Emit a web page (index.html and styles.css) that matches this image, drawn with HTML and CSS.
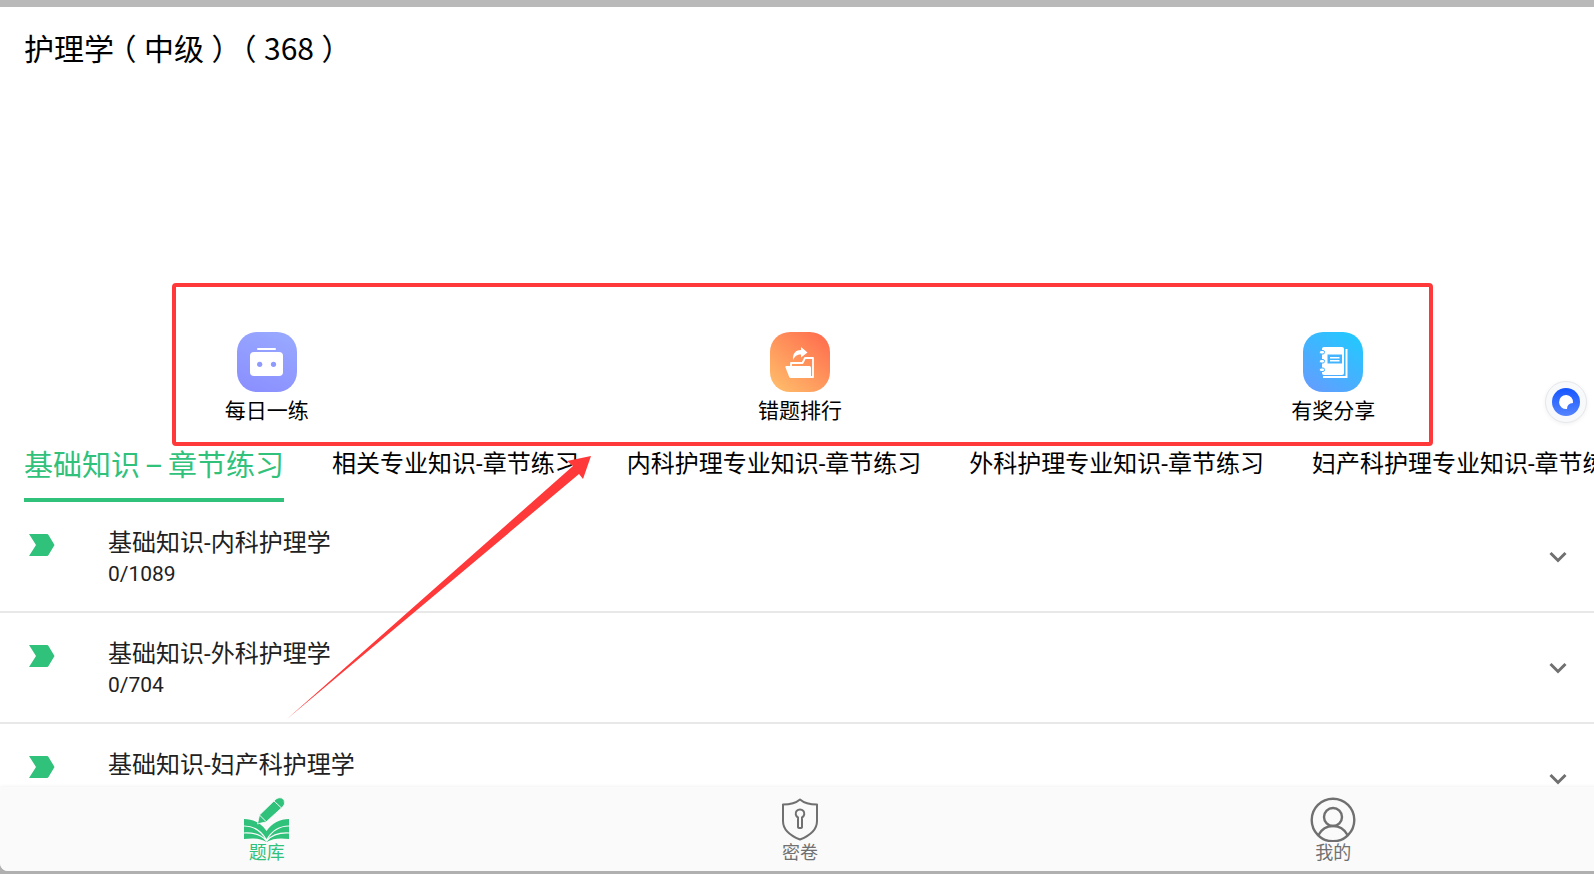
FILE: index.html
```html
<!DOCTYPE html>
<html lang="zh-CN">
<head>
<meta charset="utf-8">
<title>护理学（中级）</title>
<meta name="viewport" content="width=device-width, initial-scale=1">
<link rel="stylesheet" href="styles.css">
</head>
<body>
<div class="app">
  <header class="header"><h1 class="title">护理学<span class="paren">（</span>中级<span class="paren">）</span><span class="paren">（</span>368<span class="paren">）</span></h1></header>

  <section class="shortcuts">
    <button class="shortcut" type="button">
      <svg class="shortcut-icon" viewBox="0 0 60 60" aria-hidden="true">
        <defs><linearGradient id="violet" x1="0.7" y1="0" x2="0.3" y2="1"><stop offset="0" stop-color="#98a8ff"/><stop offset="1" stop-color="#8b90ff"/></linearGradient></defs>
        <rect width="60" height="60" rx="20" fill="url(#violet)"/>
        <rect x="20" y="16" width="19" height="2" rx="1" fill="#fff"/>
        <rect x="13" y="20" width="33" height="24" rx="4" fill="#fff"/>
        <circle cx="22.700" cy="32.300" r="2.600" fill="#8f9aff"/><circle cx="36.500" cy="32.300" r="2.600" fill="#8f9aff"/>
      </svg>
      <span>每日一练</span>
    </button>
    <button class="shortcut" type="button">
      <svg class="shortcut-icon" viewBox="0 0 60 60" aria-hidden="true">
        <defs><linearGradient id="orange" x1="0.85" y1="0.1" x2="0.15" y2="0.95"><stop offset="0" stop-color="#ff7350"/><stop offset="1" stop-color="#ffb969"/></linearGradient></defs>
        <rect width="60" height="60" rx="20" fill="url(#orange)"/>
        <path d="M23 28C22.500 21 26 18 31 18V15L37.500 20.500L31 25.500V22.500C27 22.500 25 24 23 28Z" fill="#fff"/>
        <path d="M21 34V31H32.500L35 26H43V45H22" fill="none" stroke="#fff" stroke-width="1.800" stroke-linejoin="round"/>
        <path d="M16 34H39.500Q41 34 41 36V44.500L44 46H21Q19.500 46 19 44.500L15.500 35.500Q15 34 16 34Z" fill="#fff"/>
      </svg>
      <span>错题排行</span>
    </button>
    <button class="shortcut" type="button">
      <svg class="shortcut-icon" viewBox="0 0 60 60" aria-hidden="true">
        <defs><linearGradient id="azure" x1="0.9" y1="0" x2="0.2" y2="1"><stop offset="0" stop-color="#20caff"/><stop offset="1" stop-color="#629eff"/></linearGradient></defs>
        <rect width="60" height="60" rx="20" fill="url(#azure)"/>
        <path d="M21 15H39Q41 15 41 17V41Q41 43 39 43H21Q19 43 19 41V17Q19 15 21 15Z" fill="#fff"/>
        <path d="M43.500 17V45H20" fill="none" stroke="#fff" stroke-width="2"/>
        <path d="M24.500 22.500H39V31.500H24.500Z" fill="#43b4ff"/>
        <path d="M27 25.700H36.500M27 28.800H36.500" stroke="#fff" stroke-width="1.400"/>
        <g fill="#fff" stroke="#47b1ff" stroke-width="1"><rect x="16.500" y="18.500" width="5" height="3.500" rx="1.500"/><rect x="16.500" y="27.500" width="5" height="3.500" rx="1.500"/><rect x="16.500" y="36" width="5" height="3.500" rx="1.500"/></g>
      </svg>
      <span>有奖分享</span>
    </button>
    <div class="highlight"></div>
  </section>

  <nav class="tabs">
    <button class="tab tab-active" type="button">基础知识<span class="dash">–</span>章节练习</button>
    <button class="tab" type="button">相关专业知识-章节练习</button>
    <button class="tab" type="button">内科护理专业知识-章节练习</button>
    <button class="tab" type="button">外科护理专业知识-章节练习</button>
    <button class="tab" type="button">妇产科护理专业知识-章节练习</button>
  </nav>

  <main class="chapters">
    <button class="chapter" type="button">
      <svg class="tag" viewBox="0 0 26 22" aria-hidden="true"><path d="M0 0H18Q19 0 19.500 1L25.500 11L19.500 21Q19 22 18 22H0L7 11Z"/></svg>
      <span class="chapter-text"><span class="chapter-name">基础知识-内科护理学</span><span class="chapter-count">0/1089</span></span>
      <svg class="chevron" viewBox="0 0 18 12" aria-hidden="true"><path d="M1.500 2L9 9.500L16.500 2"/></svg>
    </button>
    <button class="chapter" type="button">
      <svg class="tag" viewBox="0 0 26 22" aria-hidden="true"><path d="M0 0H18Q19 0 19.500 1L25.500 11L19.500 21Q19 22 18 22H0L7 11Z"/></svg>
      <span class="chapter-text"><span class="chapter-name">基础知识-外科护理学</span><span class="chapter-count">0/704</span></span>
      <svg class="chevron" viewBox="0 0 18 12" aria-hidden="true"><path d="M1.500 2L9 9.500L16.500 2"/></svg>
    </button>
    <button class="chapter" type="button">
      <svg class="tag" viewBox="0 0 26 22" aria-hidden="true"><path d="M0 0H18Q19 0 19.500 1L25.500 11L19.500 21Q19 22 18 22H0L7 11Z"/></svg>
      <span class="chapter-text"><span class="chapter-name">基础知识-妇产科护理学</span><span class="chapter-count"></span></span>
      <svg class="chevron" viewBox="0 0 18 12" aria-hidden="true"><path d="M1.500 2L9 9.500L16.500 2"/></svg>
    </button>
  </main>

  <footer class="bottom-nav">
    <a class="nav-item nav-active" href="#bank">
      <svg class="nav-icon" viewBox="0 0 46 46" aria-hidden="true">
        <path d="M0 23C9 23 17 27 22.500 35C28 27 36 23 45 23V43C37 42 29 42 22.500 46C16 42 8 42 0 43Z" fill="currentColor"/>
        <path d="M0 30C9 30 17 34.500 22.500 44C28 34.500 36 30 45 30M0 37C10 36.500 17 38.500 22.500 45C28 38.500 35 36.500 45 37" fill="none" stroke="#fafafa" stroke-width="1.200"/>
        <path d="M13.500 28L15.500 19L32 3Q35 1 38 2Q41 4 40.500 8L39 10.500L22 26L17 27Z" fill="currentColor" stroke="#fafafa" stroke-width="0.800"/>
        <path d="M30 5L37.500 12M15.500 19L22 25.500" stroke="#fafafa" stroke-width="1"/>
      </svg>
      <span>题库</span>
    </a>
    <a class="nav-item" href="#papers">
      <svg class="nav-icon" viewBox="0 0 46 46" aria-hidden="true">
        <g fill="none" stroke="currentColor" stroke-width="2" stroke-linejoin="round"><path d="M23 3.500C19 7 13 8.500 6 8.500V25C6 34 14 40 23 43.500C32 40 40 34 40 25V8.500C33 8.500 27 7 23 3.500Z"/><path d="M21 21.500A4.300 4.300 0 1 1 25 21.500V31Q25 32 23 32Q21 32 21 31Z"/></g>
      </svg>
      <span>密卷</span>
    </a>
    <a class="nav-item" href="#mine">
      <svg class="nav-icon" viewBox="0 0 46 46" aria-hidden="true">
        <g fill="none" stroke="currentColor" stroke-width="2.400"><circle cx="23" cy="24" r="21.300"/><circle cx="23" cy="21" r="9"/><path d="M8.500 39C12 32.500 17 30 23 30S34 32.500 37.500 39"/></g>
      </svg>
      <span>我的</span>
    </a>
  </footer>
</div>

<svg class="pointer" viewBox="0 0 304 264" aria-hidden="true"><path d="M0 263L286 10L280 5L304 0L296 23L292 18Z"/></svg>
<button class="assistant" type="button" aria-label="助手">
  <svg viewBox="0 0 28 28" aria-hidden="true"><defs><linearGradient id="blue" x1="0" y1="0" x2="0" y2="1"><stop offset="0" stop-color="#1455ff"/><stop offset="1" stop-color="#5584ff"/></linearGradient></defs><circle cx="14" cy="14" r="14" fill="url(#blue)"/><path d="M21 15A7 7 0 1 0 15 21Q15 15.500 21 15Z" fill="#fff"/></svg>
</button>
</body>
</html>
```
FILE: styles.css
```css
* { box-sizing: border-box; }

body {
  margin: 0;
  height: 100vh;
  overflow: hidden;
  position: relative;
  background: #b0b0b0;
  font-family: Roboto, "Noto Sans CJK SC", sans-serif;
  color: #000;
}

button {
  margin: 0;
  padding: 0;
  border: 0;
  background: none;
  font: inherit;
  color: inherit;
  text-align: left;
}

.app {
  display: flex;
  flex-direction: column;
  width: calc(100% + 6px);
  height: calc(100vh - 3px);
  border-top: 7px solid #b9b9b9;
  border-bottom-left-radius: 8px;
  background: #fff;
  overflow: hidden;
}

.header {
  flex: none;
  height: 276px;
  padding: 20px 24px;
}

.title {
  margin: 0;
  font-family: "Noto Sans CJK SC", sans-serif;
  font-size: 30px;
  line-height: 40px;
  font-weight: 400;
}

.paren {
  display: inline-block;
  width: 30px;
  text-align: center;
  font-feature-settings: "halt";
}

.shortcuts {
  position: relative;
  flex: none;
  display: grid;
  grid-template-columns: repeat(3, 1fr);
  height: 163px;
  padding-top: 49px;
}

.shortcut {
  display: flex;
  flex-direction: column;
  align-items: center;
  justify-self: center;
  gap: 4px;
  font-size: 21px;
  line-height: 30px;
}

.shortcut-icon {
  width: 60px;
  height: 60px;
}

.highlight {
  position: absolute;
  top: 0;
  bottom: 0;
  left: 172px;
  right: 167px;
  border: 4px solid #ff3939;
  border-radius: 4px;
  pointer-events: none;
}

.tabs {
  flex: none;
  display: flex;
  gap: 48px;
  height: 56px;
  padding-left: 24px;
}

.tab {
  flex: none;
  padding-bottom: 20px;
  font-size: 24px;
  line-height: 34px;
  white-space: nowrap;
}

.tab-active {
  padding-bottom: 12px;
  border-bottom: 4px solid #30c17b;
  color: #30c17b;
  font-size: 29px;
}

.dash {
  display: inline-block;
  width: 28px;
  text-align: center;
}

.chapters {
  flex: 1;
  min-height: 0;
  overflow: hidden;
}

.chapter {
  display: flex;
  align-items: center;
  width: 100%;
  height: 111px;
  padding: 0 33px 0 29px;
  border-bottom: 2px solid #e8e8e8;
  color: #212121;
}

.tag {
  align-self: flex-start;
  flex: none;
  width: 26px;
  height: 22px;
  margin-top: 32px;
  fill: #30c17b;
}

.chapter-text {
  flex: 1;
  display: flex;
  flex-direction: column;
  padding-left: 53px;
}

.chapter-name {
  font-size: 24px;
  line-height: 32px;
}

.chapter-count {
  height: 28px;
  font-size: 21px;
  line-height: 30px;
}

.chevron {
  flex: none;
  width: 18px;
  height: 12px;
  fill: none;
  stroke: #707070;
  stroke-width: 3;
}

.bottom-nav {
  position: relative;
  flex: none;
  display: grid;
  grid-template-columns: repeat(3, 1fr);
  height: 84px;
  padding-top: 9px;
  background: #fafafa;
  box-shadow: 0 0 4px #00000014;
}

.nav-item {
  display: flex;
  flex-direction: column;
  align-items: center;
  justify-self: center;
  color: #707070;
  font-size: 18px;
  line-height: 22px;
  text-decoration: none;
}

.nav-active { color: #30c17b; }

.nav-icon {
  width: 46px;
  height: 46px;
}

.pointer {
  position: absolute;
  left: 287px;
  top: 456px;
  width: 304px;
  height: 264px;
  fill: #ff3939;
  pointer-events: none;
}

.assistant {
  position: absolute;
  right: 7px;
  top: 381px;
  display: grid;
  place-items: center;
  width: 42px;
  height: 42px;
  border: 1px solid #e6e8ec;
  border-radius: 50%;
  background: #f8f9fb;
  box-shadow: 0 1px 4px #00000010;
}

.assistant svg {
  width: 28px;
  height: 28px;
}
```
